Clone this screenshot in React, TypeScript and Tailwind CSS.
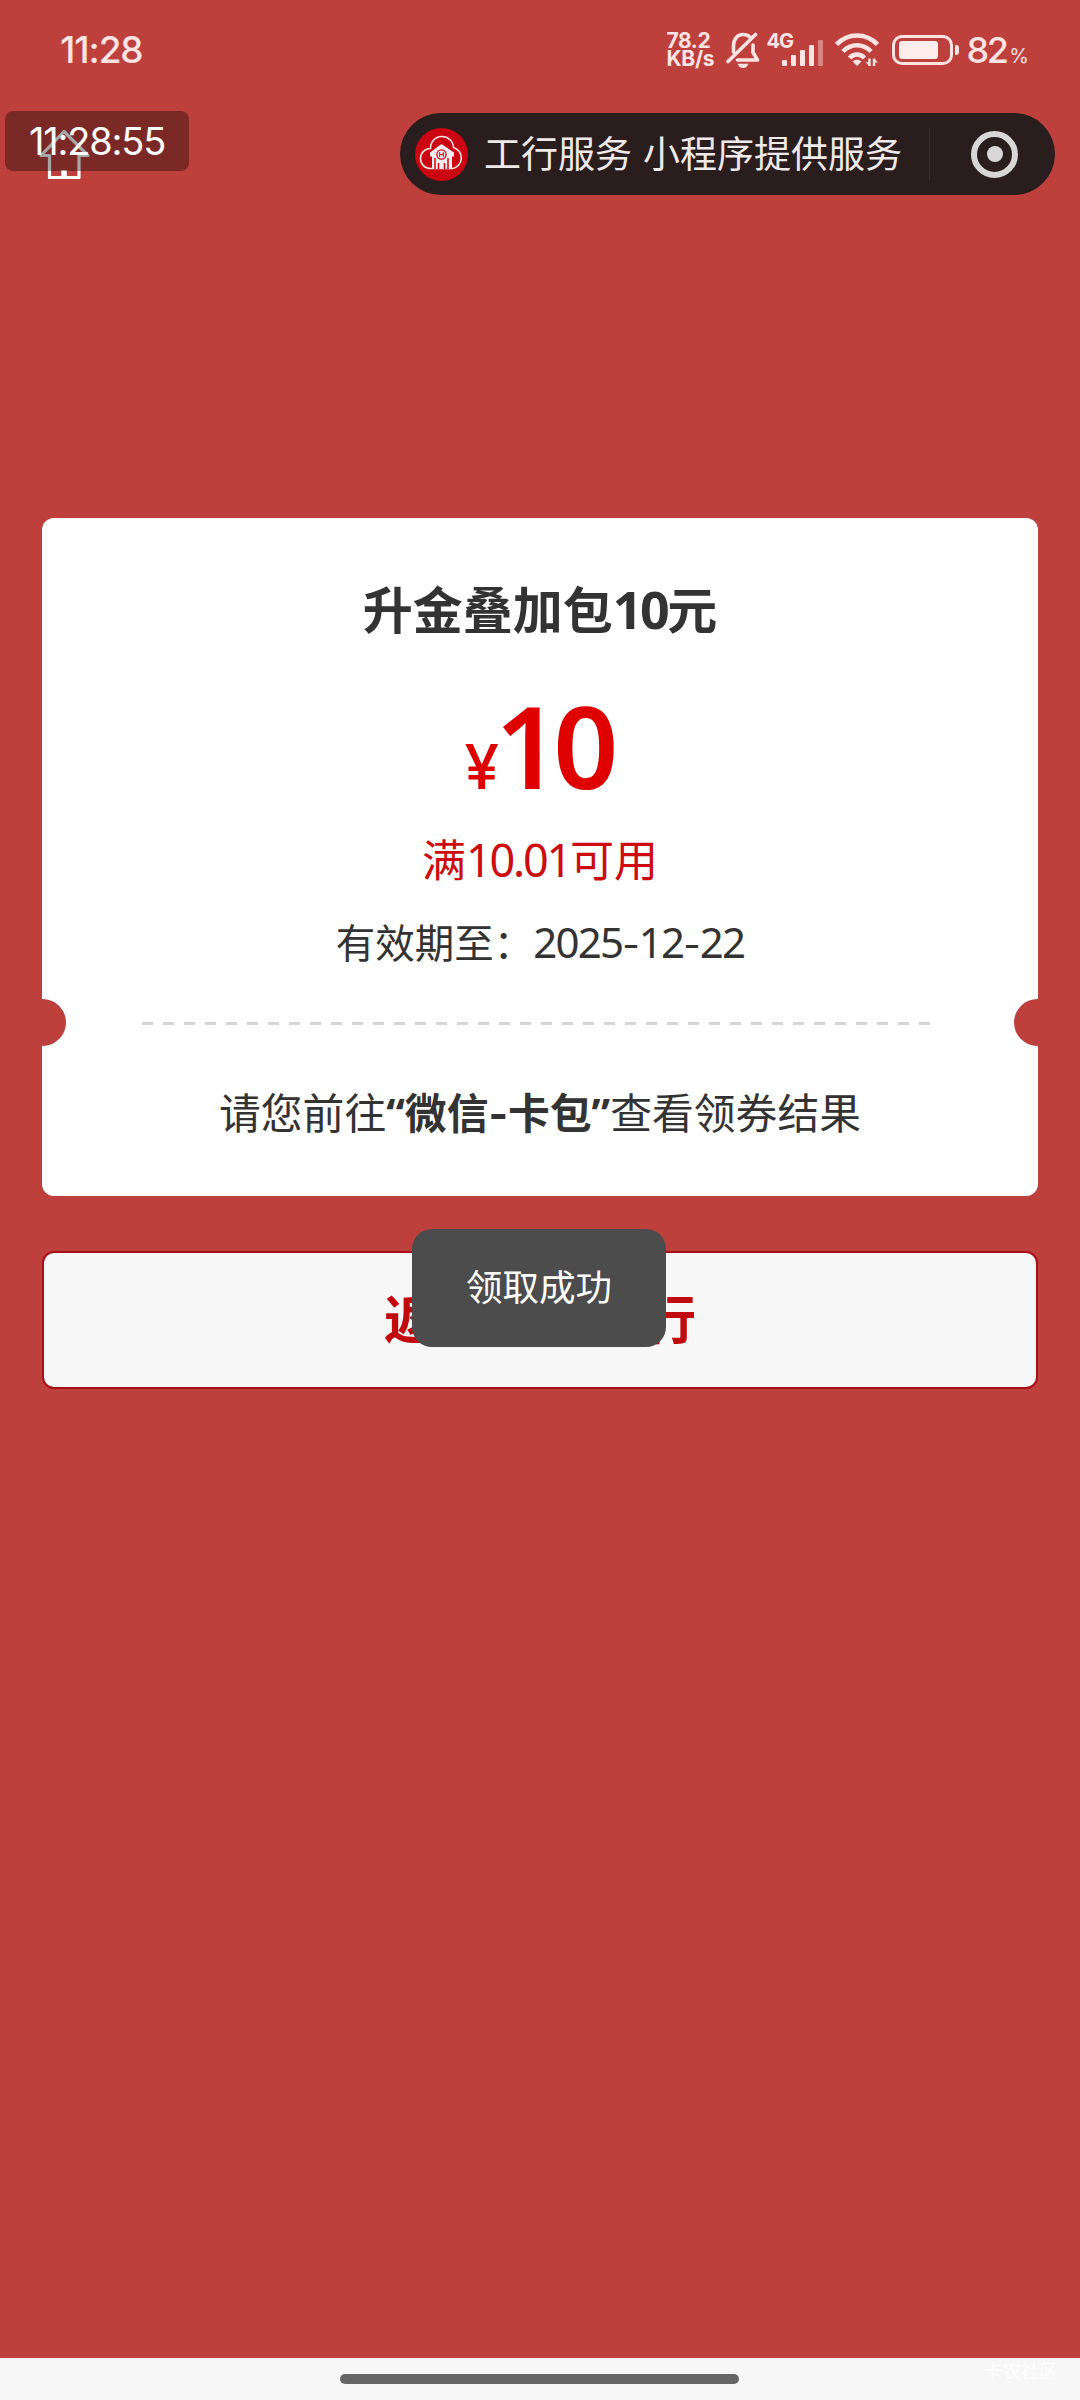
import React from "react";

const signalBars = [
  { height: "h-[6px]", color: "bg-[#fde4e2]" },
  { height: "h-[11px]", color: "bg-[#fde4e2]" },
  { height: "h-[16px]", color: "bg-[#fde4e2]" },
  { height: "h-[21px]", color: "bg-[#fde4e2]" },
  { height: "h-[26px]", color: "bg-[#d98481]" },
];

const styles = {
  page: `relative flex flex-col w-[1080px] h-[2400px] overflow-hidden bg-[#bd403d] font-['Inter','Noto_Sans_CJK_SC',sans-serif]`,
  line: `text-center whitespace-nowrap`,
  digits: `font-['Noto_Sans',sans-serif] leading-none`,
  dash: `font-['Inter',sans-serif] leading-none text-[38px] tracking-[-1px]`,
};

const BellOff = () => (
  <svg className="w-[34px] h-[37px] ml-[9px]" viewBox="0 0 34 37" fill="none" stroke="#fde4e2" strokeWidth="3.6">
    <path d="M7.5 20V14C7.5 7 11.5 2.5 17 2.5c3 0 5.300 1 7 2.700" strokeLinecap="round" />
    <path d="M27 13v7.500l4.500 7.500H11.500" strokeLinejoin="round" strokeLinecap="round" />
    <path d="M2 29.500L29.500 2.500" strokeLinecap="round" />
    <path d="M11.500 31.800h11c-1 2.800-3 4.200-5.500 4.200s-4.500-1.400-5.500-4.200z" fill="#fde4e2" stroke="none" />
  </svg>
);

const Wifi = () => (
  <svg className="w-[44px] h-[34px] ml-[11px]" viewBox="0 0 44 34" fill="none" stroke="#fde4e2" strokeWidth="4.600">
    <path d="M1.500 11.500C13 -.5 31 -.5 42.500 11.500" />
    <path d="M8 18.500c8-8.300 20-8.300 28 0" />
    <path d="M14.500 25c4.300-4.600 10.700-4.600 15 0" />
    <path d="M17.500 28.500c2.500-2.300 6.500-2.300 9 0L22 33z" fill="#fde4e2" stroke="none" />
    <path d="M34.500 25.500v7.500M39 33v-7.500" strokeWidth="2.400" />
    <path d="M30.500 29h4v4zM43 29.500h-4v-4z" fill="#fde4e2" stroke="none" />
  </svg>
);

const Battery = () => (
  <div className="flex items-center ml-[13px]">
    <div className="w-[61px] h-[30px] rounded-[10px] border-[3px] border-[#fde4e2] p-[3px] pl-[4px]">
      <div className="w-[39px] h-[18px] rounded-[3px] bg-[#fdeeed]" />
    </div>
    <div className="w-[4px] h-[10px] ml-[2px] rounded-r-[3px] bg-[#fde4e2]" />
  </div>
);

const StatusBar = () => (
  <div className="flex items-center h-[100px] pl-[60px] pr-[52px] text-[#fde4e2]">
    <div className="text-[37px] leading-[40px] font-medium tracking-[-1.1px]">11:28</div>
    <div className="flex items-center ml-auto">
      <div className="w-[50px] text-[21px] leading-[18px] font-bold whitespace-nowrap">
        <div className="tracking-[-0.4px]">78.2</div>
        <div className="tracking-[-0.3px]">KB/s</div>
      </div>
      <BellOff />
      <div className="relative flex items-end gap-[3.500px] w-[57px] h-[31px] ml-[7px] pl-[15px]">
        <span className="absolute left-0 top-[-4px] text-[20px] leading-[20px] font-bold tracking-[-1px]">4G</span>
        {signalBars.map((b, i) => (
          <div key={i} className={`w-[5.500px] rounded-[1px] ${b.height} ${b.color}`} />
        ))}
      </div>
      <Wifi />
      <Battery />
      <div className="flex items-baseline ml-[8px]">
        <span className="text-[36px] leading-[40px] font-medium tracking-[-2.5px]">82</span>
        <span className="text-[20px] leading-[20px] ml-[3px] tracking-[-1px]">%</span>
      </div>
    </div>
  </div>
);

const BankLogo = () => (
  <svg className="w-[53px] h-[53px]" viewBox="0 0 53 53">
    <circle cx="26.500" cy="26.500" r="26.500" fill="#cb0512" />
    <path
      d="M15.500 40.500A10 10 0 0 1 15.500 20.500a11.500 11.500 0 0 1 23-1A10.800 10.800 0 0 1 37.500 40.500z"
      fill="none"
      stroke="#fbe3e1"
      strokeWidth="1.600"
    />
    <path d="M26.500 16L39 24.500v4h-2v12.500H17V28.500h-2v-4z" fill="#fbeeee" />
    <circle cx="26.500" cy="26.500" r="4.600" fill="#fbeeee" stroke="#cb0512" strokeWidth="1.300" />
    <path d="M24.700 24v5M28.300 24v5M24.500 26.500h4" stroke="#cb0512" strokeWidth="1" />
    <path d="M20 30v11M33 30v11M23.500 35v6M29.500 35v6" stroke="#cb0512" strokeWidth="1.500" />
  </svg>
);

const NavBar = () => (
  <div className="flex h-[108px] pt-[13px] pl-[38px] pr-[25px]">
    <svg className="w-[52px] h-[50px] mt-[16px]" viewBox="0 0 52 50" fill="none" stroke="#fff" strokeWidth="3.200" strokeLinejoin="round" strokeLinecap="round">
      <path d="M11.500 26.500H3L26 2.500L50 26.500H41v22H11.500z" />
      <path d="M26 41v7" strokeWidth="5.500" strokeLinecap="butt" />
    </svg>
    <div className="flex items-center w-[655px] h-[82px] ml-auto pl-[15px] rounded-full bg-[#291d1e]">
      <BankLogo />
      <span className="ml-[16px] mt-px text-[37px] leading-[50px] text-[#efe9e9] whitespace-nowrap">
        工行服务<span className="inline-block w-[11px]"> </span>小程序提供服务
      </span>
      <div className="w-px h-[52px] ml-[27px] bg-[#3d2f30]" />
      <div className="flex justify-center items-center w-[47px] h-[47px] ml-[41px] rounded-full border-[6px] border-[#d8d6d6]">
        <div className="w-[16px] h-[16px] rounded-full bg-[#d8d6d6]" />
      </div>
    </div>
  </div>
);

const CouponCard = () => (
  <div className="relative h-[678px] mx-[42px] mt-[310px] pt-[58px] rounded-[12px] overflow-hidden bg-white text-[#333]">
    <div className="absolute left-[-24px] top-[481px] w-[48px] h-[47px] rounded-full bg-[#bd403d]" />
    <div className="absolute right-[-24px] top-[481px] w-[48px] h-[47px] rounded-full bg-[#bd403d]" />

    <h1 className={`${styles.line} h-[70px] leading-[70px] text-[50px] font-bold`}>
      升金叠加包<span className={`${styles.digits} text-[52px] tracking-[-2.5px]`}>10</span>元
    </h1>
    <div className="flex justify-center items-baseline h-[120px] mt-[39px] pr-[4px] text-[#df0000] font-semibold leading-[120px]">
      <span className="text-[62px] font-medium">¥</span>
      <span className="font-['Noto_Sans',sans-serif] text-[114px] tracking-[-7px] ml-[-4px]">10</span>
    </div>
    <p className={`${styles.line} h-[60px] mt-[26px] leading-[60px] text-[44px] text-[#cc0c0f]`}>
      满<span className={`${styles.digits} text-[45px] tracking-[-2.2px]`}>10.01</span>可用
    </p>
    <p className={`${styles.line} h-[60px] mt-[23px] leading-[60px] text-[39.500px]`}>
      有效期至：
      <span className={`${styles.digits} text-[42px] tracking-[-1.8px]`}>
        2025<span className={styles.dash}>-</span>12<span className={styles.dash}>-</span>22
      </span>
    </p>

    <svg className="block w-[788px] h-[3px] ml-[100px] mt-[48px]" viewBox="0 0 788 3">
      <path d="M0 1.500H788" stroke="#d6d6d6" strokeWidth="3" strokeDasharray="11 10" />
    </svg>

    <p className={`${styles.line} h-[60px] mt-[59px] leading-[60px] text-[41.800px]`}>
      请您前往<b><span className={styles.digits}>“</span>微信-卡包<span className={styles.digits}>”</span></b>查看领券结果
    </p>
  </div>
);

const App = () => {
  return (
    <div className={styles.page}>
      <StatusBar />
      <NavBar />
      <CouponCard />

      <button className="h-[138px] mx-[42px] mt-[55px] pt-[2px] rounded-[12px] border-2 border-[#a90f18] bg-[#f7f7f7] text-[52px] font-bold text-[#c10a0d]">
        返回手机银行
      </button>

      <div className="flex justify-center h-[42px] mt-auto pt-[16px] pr-px bg-[#f7f7f7]">
        <div className="w-[399px] h-[10px] rounded-full bg-[#666]" />
      </div>
      <span className="absolute right-[22px] bottom-[17px] text-[18.500px] leading-[24px] text-white/80">卡农社区</span>

      {/* floating clock */}
      <div className="absolute left-[5px] top-[111px] flex items-center justify-center w-[184px] h-[60px] rounded-[8px] bg-black/35 text-[38px] tracking-[-1.2px] text-white">
        11:28:55
      </div>

      {/* toast */}
      <div className="absolute left-[412px] top-[1229px] flex items-center justify-center w-[254px] h-[118px] rounded-[20px] bg-[#4c4c4c] text-[36.500px] text-white">
        领取成功
      </div>
    </div>
  );
};

export default App;
